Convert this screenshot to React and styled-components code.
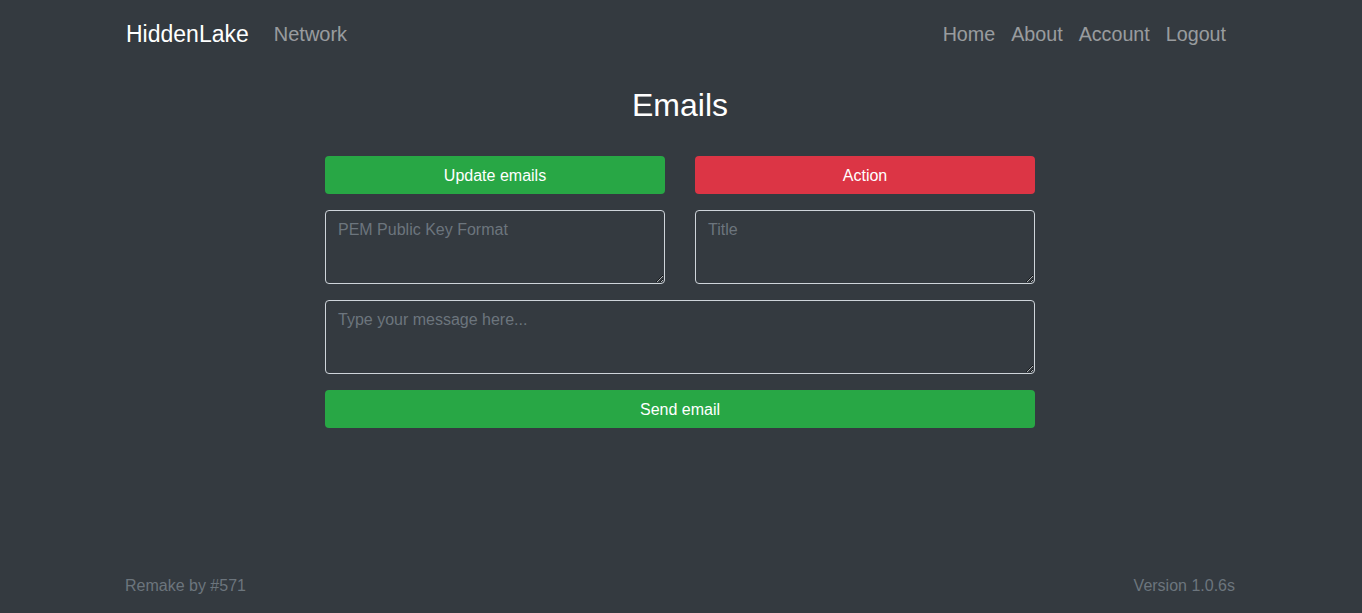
import React from "react";
import styled, { createGlobalStyle } from "styled-components";

const Global = createGlobalStyle`
  html, body { margin: 0; padding: 0; background: #343a40; }
  body { font-family: "Liberation Sans", Arial, sans-serif; color: #fff; }
  * { box-sizing: border-box; }
`;

const Page = styled.div`
  min-height: 100vh;
  display: flex;
  flex-direction: column;
  padding-right: 2px;
  background: #343a40;
`;

const Container = styled.div`
  width: 1110px;
  margin: 0 auto;
`;

const Navbar = styled(Container)`
  height: 68px;
  display: flex;
  align-items: center;
  justify-content: space-between;
`;

const Left = styled.div`
  display: flex;
  align-items: center;
`;

const Brand = styled.a`
  font-size: 23px;
  color: #fff;
  text-decoration: none;
  margin-right: 17px;
  line-height: 36px;
  padding-left: 1px;
`;

const Nav = styled.nav`
  display: flex;
  align-items: center;
  margin-right: ${(p) => (p.$right ? "1px" : "0")};
`;

const NavLink = styled.a`
  font-size: ${(p) => (p.$main ? "20px" : "19.7px")};
  line-height: 30px;
  padding: 0 8px;
  color: rgba(255, 255, 255, 0.5);
  text-decoration: none;
`;

const Main = styled.main`
  flex: 1;
  display: flex;
  flex-direction: column;
  align-items: center;
`;

const Title = styled.h2`
  font-size: 32px;
  font-weight: 400;
  line-height: 38px;
  margin: 18px 0 32px;
  color: #fff;
`;

const Form = styled.div`
  width: 710px;
  display: flex;
  flex-direction: column;
  gap: 16px;
`;

const Row = styled.div`
  display: grid;
  grid-template-columns: 1fr 1fr;
  column-gap: 30px;
`;

const Button = styled.button`
  height: 38px;
  width: 100%;
  border: none;
  border-radius: 4px;
  padding: 2px 12px 0;
  background: ${(p) => (p.$variant === "danger" ? "#dc3545" : "#28a745")};
  color: #fff;
  font-family: "Liberation Sans", Arial, sans-serif;
  font-size: 16px;
  line-height: 24px;
  cursor: pointer;
`;

const Area = styled.textarea`
  display: block;
  width: 100%;
  height: 74px;
  padding: 7px 12px 5px;
  border: 1px solid #ced4da;
  border-radius: 4px;
  background: transparent;
  color: #fff;
  font-family: "Liberation Sans", Arial, sans-serif;
  font-size: 16px;
  line-height: 24px;
  margin: 0;
  outline: none;
  &::placeholder { color: #6c757d; }
`;

const Footer = styled(Container)`
  display: flex;
  justify-content: space-between;
  padding: 0 0 15px;
  font-size: 16px;
  line-height: 24px;
  color: #6c757d;
`;

export default function App() {
  return (
    <Page>
      <Global />
      <Navbar as="header">
        <Left>
          <Brand href="#">HiddenLake</Brand>
          <Nav>
            <NavLink $main href="#">Network</NavLink>
          </Nav>
        </Left>
        <Nav $right>
          <NavLink href="#">Home</NavLink>
          <NavLink href="#">About</NavLink>
          <NavLink href="#">Account</NavLink>
          <NavLink href="#">Logout</NavLink>
        </Nav>
      </Navbar>
      <Main>
        <Title>Emails</Title>
        <Form>
          <Row>
            <Button>Update emails</Button>
            <Button $variant="danger">Action</Button>
          </Row>
          <Row>
            <Area placeholder="PEM Public Key Format" />
            <Area placeholder="Title" />
          </Row>
          <Area placeholder="Type your message here..." />
          <Button>Send email</Button>
        </Form>
      </Main>
      <Footer as="footer">
        <span>Remake by #571</span>
        <span>Version 1.0.6s</span>
      </Footer>
    </Page>
  );
}
